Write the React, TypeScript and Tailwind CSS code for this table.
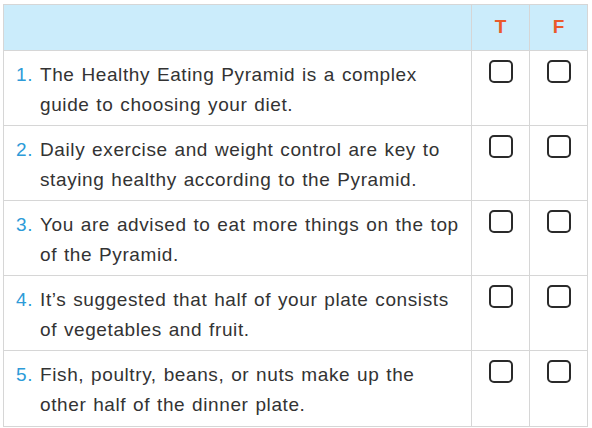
const ROWS = [
  'The Healthy Eating Pyramid is a complex guide to choosing your diet.',
  'Daily exercise and weight control are key to staying healthy according to the Pyramid.',
  'You are advised to eat more things on the top of the Pyramid.',
  'It’s suggested that half of your plate consists of vegetables and fruit.',
  'Fish, poultry, beans, or nuts make up the other half of the dinner plate.',
]

function Box() {
  return <div className="w-[24px] h-[23px] rounded-[5px] border-2 border-[#2a2a2a] bg-white" />
}

export default function App() {
  return (
    <div className="w-[592px] h-[428px] bg-white pt-[4px] pl-[3px] font-['Liberation_Sans',Arial,sans-serif]">
      <div className="w-[585px] border border-[#d6d6d6]">
        <div className="grid grid-cols-[467px_58px_58px] h-[46px] bg-[#cbecfb] border-b border-[#d6d6d6]">
          <div />
          <div className="border-l border-[#d6d6d6] flex items-center justify-center text-[19px] font-bold text-[#ea5a2a]">T</div>
          <div className="border-l border-[#d6d6d6] flex items-center justify-center text-[19px] font-bold text-[#ea5a2a]">F</div>
        </div>
        {ROWS.map((text, i) => (
          <div
            key={i}
            className={`grid grid-cols-[467px_58px_58px] h-[75px] ${i < ROWS.length - 1 ? 'border-b border-[#d6d6d6]' : ''}`}
          >
            <div className="flex pl-[12px] pr-[9px] pt-[9px] text-[19px] leading-[30px] tracking-[0.6px] [word-spacing:1px] text-[#333333]">
              <span className="w-[24px] shrink-0 text-[#2d9bd8]">{i + 1}.</span>
              <span>{text}</span>
            </div>
            <div className="border-l border-[#d6d6d6] flex justify-center pt-[9px]">
              <Box />
            </div>
            <div className="border-l border-[#d6d6d6] flex justify-center pt-[9px]">
              <Box />
            </div>
          </div>
        ))}
      </div>
    </div>
  )
}
